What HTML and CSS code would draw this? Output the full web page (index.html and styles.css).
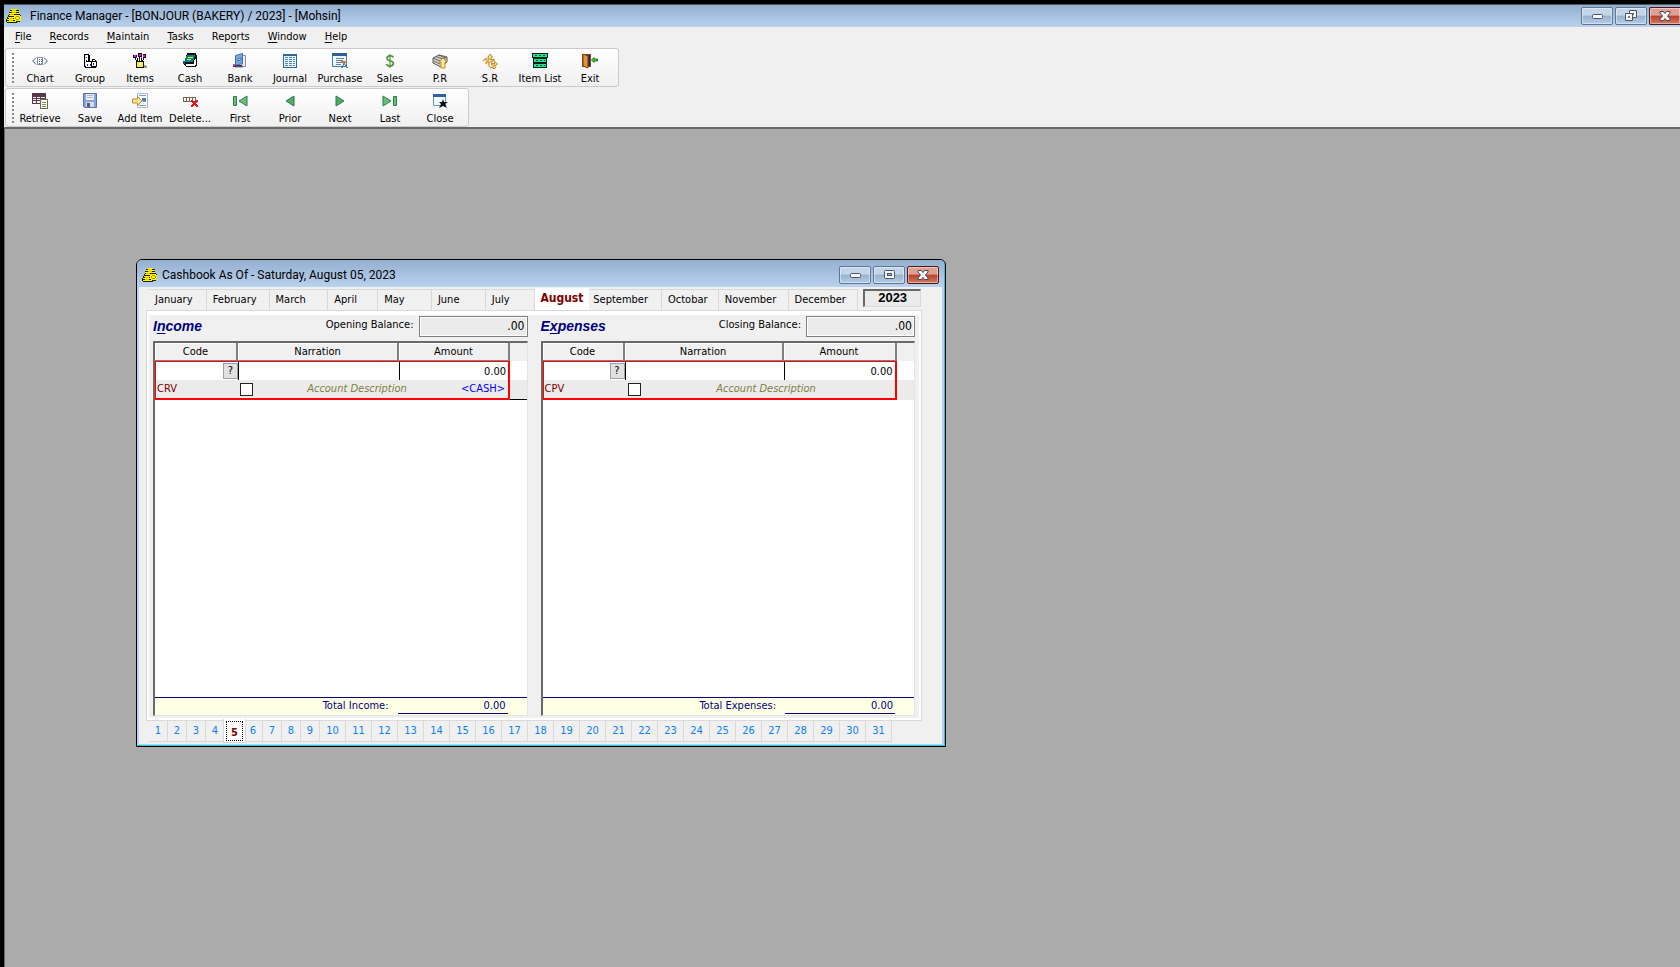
FILE: index.html
```html
<!DOCTYPE html>
<html lang="en">
<head>
<meta charset="utf-8">
<title>Finance Manager</title>
<link rel="stylesheet" href="styles.css">
</head>
<body>
<svg class="defs" aria-hidden="true">
  <symbol id="coins" viewBox="0 0 16 16">
    <g shape-rendering="crispEdges">
      <path d="M5 1h6v1h2v4h1v1h1v5h-1v2h-3v1H1v-1H0v-3h1V9h1V7h1V4h1V2h1z" fill="#222205"/>
      <path d="M5 1h6v1H5zM4 3h9v1H4zM3 5h10v1H3zM3 7h6v1H3zM2 9h6v1H2zM1 11h7v1H1zM1 13h9v1H1zM9 7h5v1h1v4h-1v1H9v-1H8V8h1z" fill="#fff500"/>
      <path d="M10 8h3v1h-3zM13 9h1v2h-1zM10 11h3v1h-3zM9 9h1v2H9z" fill="#a8a000"/>
      <path d="M6 2h4v1H6zM6 4h4v1H6zM4 6h4v1H4zM3 10h4v1H3zM3 12h4v1H3z" fill="#d6cd00"/>
    </g>
  </symbol>
  <symbol id="min" viewBox="0 0 12 12"><rect x="1.500" y="4.500" width="10" height="4" rx="1" fill="#f6f6f6" stroke="#4c5666"/></symbol>
  <symbol id="max" viewBox="0 0 12 12"><rect x="1.500" y="1.500" width="10" height="8" rx="1" fill="#f6f6f6" stroke="#4c5666"/><rect x="4.500" y="4.500" width="4" height="2" fill="#9ab3ce" stroke="#4c5666"/></symbol>
  <symbol id="restore" viewBox="0 0 12 12"><path d="M4.500.5h7v7h-7z" fill="#f6f6f6" stroke="#4c5666"/><path d="M7.500 3.500h1v1h-1z" stroke="#4c5666"/><path d="M.5 3.500h7v7h-7z" fill="#f6f6f6" stroke="#4c5666"/><path d="M3.500 6.500h1v1h-1z" fill="#9ab3ce" stroke="#4c5666"/></symbol>
  <symbol id="cross" viewBox="0 0 12 12"><path d="M1 1.500h3.500L6 3.500l1.500-2H11v1.500L8.500 6 11 9v1.500H7.500L6 8.500l-1.500 2H1V9l2.500-3L1 3z" fill="#f8f8f8" stroke="#4c4658"/></symbol>
</svg>

<div class="app">
  <header class="titlebar">
    <svg class="ico" aria-hidden="true"><use href="#coins"/></svg>
    <h1 class="title">Finance Manager - [BONJOUR (BAKERY) / 2023] - [Mohsin]</h1>
    <div class="winbtns">
      <button class="winbtn" aria-label="Minimize"><svg><use href="#min"/></svg></button>
      <button class="winbtn" aria-label="Restore"><svg><use href="#restore"/></svg></button>
      <button class="winbtn winclose clipped" aria-label="Close"><svg><use href="#cross"/></svg></button>
    </div>
  </header>

  <nav class="menu">
    <button><u>F</u>ile</button><button><u>R</u>ecords</button><button><u>M</u>aintain</button><button><u>T</u>asks</button><button>Rep<u>o</u>rts</button><button><u>W</u>indow</button><button><u>H</u>elp</button>
  </nav>

  <div class="toolbar">
    <span class="grip"></span>
    <button><svg class="ico" viewBox="0 0 16 16"><path d="M4 4.500L.7 8 4 11.500M12 4.500L15.300 8 12 11.500" fill="none" stroke="#3f6ea8"/><path d="M5.500 4.500h5v7h-5z" fill="#fff" stroke="#7a889a"/><path d="M7 6h1v1H7zM9 6h1v1H9zM7 8h1v1H7zM9 8h1v1H9zM7 10h1v1H7zM9 10h1v1H9z" fill="#3f6ea8"/></svg>Chart</button>
    <button><svg class="ico" viewBox="0 0 16 16" shape-rendering="crispEdges"><path d="M2 1h5v1h1v6h2V6h3v1h1v1h1v6h-1v1H3v-1H2z" fill="#000"/><path d="M4 2h2v6H4zM3 9h6v5H4v-1H3zM11 7h2v1h-2zM10 9h4v4h-4z" fill="#fff"/><path d="M3 2h1v11H3z" fill="#ddd"/><path d="M4 4h1v1H4zM4 7h1v1H4zM5 11h1v2H5zM8 11h1v2H8zM11 10h1v2h-1z" fill="#2020e0"/></svg>Group</button>
    <button><svg class="ico" viewBox="0 0 16 16" shape-rendering="crispEdges"><path d="M11 13h4v2h-4zM12 12h2v1h-2z" fill="#999"/><path d="M1 2h4v3H1zM6 0h4v4H6zM11 1h3v4h-3zM3 5h1v2H3zM7 4h1v4H7zM11 5h1v2h-1zM4 7h2v1H4zM9 7h2v1H9zM9 5h1v2H9zM5 5h1v2H5z" fill="#111"/><path d="M2 2h2v2H2zM7 1h2v2H7zM11 2h2v2h-2zM4 4h1v1H4zM9 4h1v1H9z" fill="#f016e8"/><path d="M4 8h8v7H4z" fill="#111"/><path d="M5 9h6v5H5z" fill="#f7e93b"/><path d="M7 10h2v2H7z" fill="#fff"/></svg>Items</button>
    <button><svg class="ico" viewBox="0 0 16 16" shape-rendering="crispEdges"><path d="M5 0h9v2h1v10l-2 2H4l-2-2 1-5z" fill="#111"/><path d="M5 2h8l-2 7H2z" fill="#078080"/><path d="M4 11h8V9l1-3h1v5l-2 2H4z" fill="#fff"/><path d="M6 4h5v1H6zM5 6h4v1H5z" fill="#f5ee36"/><path d="M1 8h2v3H1z" fill="#056060"/></svg>Cash</button>
    <button><svg class="ico" viewBox="0 0 16 16"><path d="M10 2.500h3.500v11H10z" fill="#eef" stroke="#888b94"/><path d="M3.500 2.500l7-2v10l-7 2z" fill="#78a8e4" stroke="#466ba3"/><path d="M6 6l3-1v2L6 8z" fill="#f4ebbd" stroke="#496c9a"/><path d="M1 12h9v2H1z" fill="#39364b"/><path d="M1 11h2v2H1z" fill="#e334dc"/><path d="M3 14h8" stroke="#777"/></svg>Bank</button>
    <button><svg class="ico" viewBox="0 0 16 16" shape-rendering="crispEdges"><path d="M1 1h14v14H1z" fill="#2d679e"/><path d="M2 3h12v11H2z" fill="#e7f2fa"/><path d="M3 4h10M3 6h10M3 8h10M3 10h10M3 12h10" transform="translate(0 .5)" stroke="#4b8ec5" stroke-dasharray="3 1"/></svg>Journal</button>
    <button><svg class="ico" viewBox="0 0 16 16"><path d="M.5 1.500h14v12H.5z" fill="#eff6fc" stroke="#477bac"/><path d="M0 0h15v3H0z" fill="#315f99"/><path d="M4 5.500h8M4 7.500h7M4 9.500h6M4 11.500h5" stroke="#6f8193"/><path d="M9 8h6v2H9z" fill="#c87a48"/><path d="M12 10l-2 5M12 10l3 5" stroke="#276f9e"/><path d="M9 14h2v1H9zM14 14h2v1h-2z" fill="#43a637"/></svg>Purchase</button>
    <button><svg class="ico" viewBox="0 0 16 16"><path d="M8 1v14" stroke="#397e27"/><path d="M11.300 4.500C10.500 2 5 2.300 5 5.200c0 3.300 6.400 2 6.400 5.200 0 3-6 3.300-6.800.5" fill="none" stroke="#4f9737" stroke-width="1.700"/></svg>Sales</button>
    <button><svg class="ico" viewBox="0 0 16 16"><path d="M1 5l6-3 8 2v5l-6 5-8-4z" fill="#d4d4cc" stroke="#55564e"/><path d="M1 5l7 3 7-4M2 8l6 3M4 3.500l7 2.500M7 2l6 3" stroke="#65665e" fill="none"/><path d="M11 5l4 4h-2v6H9V9H7z" fill="#ffe7a0" stroke="#c68b22"/></svg>P.R</button>
    <button><svg class="ico" viewBox="0 0 16 16"><path d="M.7 8L4 5v2h3V5H5.500L8 1l2.500 3L9 5v2l3-1v2H9v2h1" fill="#fcdd91" stroke="#be872c"/><path d="M4 11V9h3v4l1 1.500h3M9.500 10.500h3v-2l3 2.500-3 2v-1h-3zM11 13v2.500h2l1-2" fill="#fcdd91" stroke="#be872c"/></svg>S.R</button>
    <button><svg class="ico" viewBox="0 0 16 16" shape-rendering="crispEdges"><path d="M0 0h16v5h-1v10H1V5H0z" fill="#061c18"/><path d="M1 1h14v3H1zM2 6h12v3H2zM2 11h12v3H2z" fill="#16e78b"/><path d="M3 2h2v1H3zM7 2h2v1H7zM11 2h2v1h-2zM4 7h2v1H4zM8 7h2v1H8zM12 7h1v1h-1zM4 12h2v1H4zM8 12h2v1H8zM12 12h1v1h-1z" fill="#06403a"/></svg>Item List</button>
    <button><svg class="ico" viewBox="0 0 16 16"><path d="M0 1h9v13H0z" fill="#8f4519"/><path d="M4 2h4v11H4z" fill="#152a65"/><path d="M1 1l5 2v12l-5-2z" fill="#e39238" stroke="#7b4119"/><path d="M9.500 7L12 4.500v1.500h3.500v2H12v1.500z" fill="#4db833" stroke="#278820"/></svg>Exit</button>
  </div>

  <div class="toolbar last">
    <span class="grip"></span>
    <button><svg class="ico" viewBox="0 0 16 16" shape-rendering="crispEdges"><path d="M0 0h14v11H0z" fill="#59374f"/><path d="M1 4h3v1H1zM5 4h3v1H5zM9 4h4v1H9zM1 6h3v1H1zM5 6h3v1H5zM9 6h4v1H9zM1 8h3v2H1zM5 8h3v2H5z" fill="#eee"/><path d="M8 6h8v10H8z" fill="#6d6e50"/><path d="M9 7h6v8H9z" fill="#fffff0"/><path d="M10 9h4v1h-4zM10 11h4v1h-4zM10 13h4v1h-4z" fill="#8c8d70"/></svg>Retrieve</button>
    <button><svg class="ico" viewBox="0 0 16 16"><path d="M1.500.5h13v14h-12l-1-1z" fill="#8aa4da" stroke="#596fa9"/><path d="M4 1h8v6H4z" fill="#eaf0fb"/><path d="M5 2.500h6M5 4.500h6" stroke="#a8b6cf"/><path d="M4 9h8v5H4z" fill="#d5dae4"/><path d="M5 10h3v4H5z" fill="#4c5d87"/></svg>Save</button>
    <button><svg class="ico" viewBox="0 0 16 16"><path d="M5.500.5h10v14h-10z" fill="#f6f9fd" stroke="#aeb6c0"/><path d="M7 2.500h7M10 5.500h4M11 8.500h3M7 12.500h7" stroke="#7f9fc6"/><path d="M10 5h4v3h-4z" fill="#477dba"/><path d="M.5 6h5V3.500L10 8l-4.500 4.500V10h-5z" fill="#ffe69b" stroke="#c28928"/></svg>Add Item</button>
    <button><svg class="ico" viewBox="0 0 16 16" shape-rendering="crispEdges"><path d="M1 4h13v5H1z" fill="#706858"/><path d="M2 5h2v3H2zM5 5h2v3H5zM8 5h2v3H8zM11 5h2v3h-2z" fill="#fffff0"/><path d="M9 7h2v1h1v1h1V8h1V7h2v2h-1v1h-1v1h1v1h1v2h-2v-1h-1v-1h-1v1h-1v1H9v-2h1v-1h1v-1h-1V9H9z" fill="#e31620"/></svg>Delete...</button>
    <button><svg class="ico" viewBox="0 0 16 16"><path d="M1.500 3.500h3v9h-3zM15 3v10L7 8z" fill="#6dba7c" stroke="#268049"/></svg>First</button>
    <button><svg class="ico" viewBox="0 0 16 16"><path d="M12 3v10L4 8z" fill="#52aa67" stroke="#268049"/></svg>Prior</button>
    <button><svg class="ico" viewBox="0 0 16 16"><path d="M4 3v10l8-5z" fill="#52aa67" stroke="#268049"/></svg>Next</button>
    <button><svg class="ico" viewBox="0 0 16 16"><path d="M11.500 3.500h3v9h-3zM1 3v10l8-5z" fill="#6dba7c" stroke="#268049"/></svg>Last</button>
    <button><svg class="ico" viewBox="0 0 16 16"><path d="M1.500 1.500h12v11h-12z" fill="#f3f8fd" stroke="#6291c3"/><path d="M1 1h13v3H1z" fill="#2c62a8"/><path d="M11 6l1 3h4l-3 2 2 4-4-2-4 2 2-4-2-2h3z" fill="#0a1020"/></svg>Close</button>
  </div>

  <main class="desktop">
    <section class="window">
      <header class="titlebar">
        <svg class="ico" aria-hidden="true"><use href="#coins"/></svg>
        <h2 class="title">Cashbook As Of - Saturday, August 05, 2023</h2>
        <div class="winbtns">
          <button class="winbtn" aria-label="Minimize"><svg><use href="#min"/></svg></button>
          <button class="winbtn" aria-label="Maximize"><svg><use href="#max"/></svg></button>
          <button class="winbtn winclose" aria-label="Close"><svg><use href="#cross"/></svg></button>
        </div>
      </header>
      <div class="client">
        <nav class="months">
          <button class="m58">January</button><button class="m63">February</button><button class="m59">March</button><button class="m50">April</button><button class="m54">May</button><button class="m54">June</button><button class="m49">July</button><button class="m55 current">August</button><button class="m73 near">September</button><button class="m57">Octobar</button><button class="m70">November</button><button class="m70">December</button>
          <output class="year">2023</output>
        </nav>

        <div class="sheet">
          <section class="ledger">
            <div class="summary">
              <h3>I<u>n</u>come</h3>
              <label for="opening">Opening Balance:</label>
              <input id="opening" class="balance" value=".00" readonly>
            </div>
            <div class="grid">
              <table>
                <colgroup><col class="c-code"><col class="c-narr"><col class="c-amt"><col></colgroup>
                <thead><tr><th>Code</th><th>Narration</th><th>Amount</th><td></td></tr></thead>
                <tbody>
                  <tr class="entry">
                    <td><div class="lookup"><input aria-label="Income code"><button>?</button></div></td>
                    <td><input aria-label="Income narration"></td>
                    <td><input class="num" aria-label="Income amount" value="0.00"></td>
                    <td></td>
                  </tr>
                  <tr class="detail">
                    <td colspan="3"><div class="account"><span class="voucher">CRV</span><input type="checkbox" aria-label="Mark income entry"><em>Account Description</em><span class="cash">&lt;CASH&gt;</span></div></td>
                    <td class="ruled"></td>
                  </tr>
                </tbody>
              </table>
              <div class="total"><span class="total-label">Total Income:</span><span class="sum">0.00</span></div>
            </div>
          </section>

          <section class="ledger">
            <div class="summary">
              <h3>E<u>x</u>penses</h3>
              <label for="closing">Closing Balance:</label>
              <input id="closing" class="balance" value=".00" readonly>
            </div>
            <div class="grid">
              <table>
                <colgroup><col class="c-code"><col class="c-narr"><col class="c-amt"><col></colgroup>
                <thead><tr><th>Code</th><th>Narration</th><th>Amount</th><td></td></tr></thead>
                <tbody>
                  <tr class="entry">
                    <td><div class="lookup"><input aria-label="Expense code"><button>?</button></div></td>
                    <td><input aria-label="Expense narration"></td>
                    <td><input class="num" aria-label="Expense amount" value="0.00"></td>
                    <td></td>
                  </tr>
                  <tr class="detail">
                    <td colspan="3"><div class="account"><span class="voucher">CPV</span><input type="checkbox" aria-label="Mark expense entry"><em>Account Description</em></div></td>
                    <td></td>
                  </tr>
                </tbody>
              </table>
              <div class="total"><span class="total-label">Total Expenses:</span><span class="sum">0.00</span></div>
            </div>
          </section>
        </div>

        <nav class="days">
          <button>1</button><button>2</button><button>3</button><button>4</button><button class="today"><span>5</span></button><button>6</button><button>7</button><button>8</button><button>9</button><button class="two-digit">10</button><button class="two-digit">11</button><button class="two-digit">12</button><button class="two-digit">13</button><button class="two-digit">14</button><button class="two-digit">15</button><button class="two-digit">16</button><button class="two-digit">17</button><button class="two-digit">18</button><button class="two-digit">19</button><button class="two-digit">20</button><button class="two-digit">21</button><button class="two-digit">22</button><button class="two-digit">23</button><button class="two-digit">24</button><button class="two-digit">25</button><button class="two-digit">26</button><button class="two-digit">27</button><button class="two-digit">28</button><button class="two-digit">29</button><button class="two-digit">30</button><button class="two-digit">31</button>
        </nav>
      </div>
    </section>
  </main>
</div>
</body>
</html>
```
FILE: styles.css
```css
* { box-sizing: border-box; }

body {
  margin: 0;
  overflow: hidden;
  color: #000;
  background: #000;
  font: 11px/14px "DejaVu Sans Condensed", "Noto Sans", sans-serif;
}

button, input {
  margin: 0;
  padding: 0;
  border: 0;
  border-radius: 0;
  background: none;
  color: inherit;
  font: inherit;
}

u { text-underline-offset: 2px; }

.defs { display: none; }

.ico {
  flex: none;
  width: 16px;
  height: 16px;
}

.app {
  display: flex;
  flex-direction: column;
  height: 100vh;
  border: solid #000;
  border-width: 4px 0 0 4px;
  background: #f0f0f0;
}

/* Title bars */
.titlebar {
  display: flex;
  flex: none;
  align-items: center;
  height: 23px;
  padding-left: 2px;
  border-top: 1px solid #4b5563;
  background: linear-gradient(#94b0cf, #b9d2ee);
}

.title {
  flex: 1;
  margin: 0 0 0 8px;
  font: 12px/16px Roboto, "Noto Sans", sans-serif;
}

.winbtns {
  display: flex;
  gap: 2px;
}

.winbtn {
  display: flex;
  align-items: center;
  justify-content: center;
  width: 32px;
  height: 18px;
  border: 1px solid #5f7694;
  border-radius: 2px;
  background: linear-gradient(#c3d5e8 0 45%, #98b2cf 50%, #b5cde6);
  box-shadow: inset 0 0 0 1px #ffffff70;
}

.winbtn svg {
  width: 12px;
  height: 12px;
}

.winclose {
  border-color: #52151b;
  background: linear-gradient(#dda093 0 45%, #b8402c 50%, #cf7b61);
}

.clipped {
  width: 31px;
  border-right: 0;
  border-radius: 2px 0 0 2px;
}

/* Menu and toolbars */
.menu {
  display: flex;
  flex: none;
  gap: 18px;
  height: 21px;
  padding: 0 11px 1px;
}

.toolbar {
  display: flex;
  flex: none;
  align-self: flex-start;
  height: 39px;
  margin: 0 0 1px 1px;
  padding: 0 3px 0 0;
  border: 1px solid #cbcbcb;
  border-radius: 3px;
  background: linear-gradient(#fff, #f0f0f0);
}

.toolbar.last { margin-bottom: 0; }

.grip {
  width: 2px;
  margin: 4px 1px 2px 6px;
  background: repeating-linear-gradient(#8a8a8a 0 2px, transparent 2px 4px);
}

.toolbar button {
  display: flex;
  flex-direction: column;
  align-items: center;
  gap: 3px;
  width: 50px;
  padding-top: 4px;
  white-space: nowrap;
}

.desktop {
  position: relative;
  flex: 1;
  border: solid #696969;
  border-width: 2px 0 0 1px;
  background: #ababab;
}

/* Cashbook window */
.window {
  position: absolute;
  left: 131px;
  top: 130px;
  width: 810px;
  padding: 0 1px 2px 2px;
  border: 1px solid #000;
  border-radius: 6px 6px 0 0;
  background: #b9d2ee;
  box-shadow: inset -1px -1px #20c6dc;
}

.window .titlebar {
  height: 27px;
  margin: 0 0 0 -2px;
  padding: 2px 5px 0;
  border-top: 0;
  border-radius: 5px 5px 0 0;
}

.window .title { margin-left: 4px; }

.client {
  margin-right: 2px;
  padding: 1px 21px 2px 8px;
  background: #f0f0f0;
}

.months {
  display: flex;
  align-items: flex-start;
  height: 23px;
  padding-left: 2px;
}

.months button {
  height: 22px;
  margin-top: 1px;
  padding-left: 6px;
  border: solid #d9d9d9;
  border-width: 1px 1px 1px 0;
  text-align: left;
}

.months .near { padding-left: 4px; }

.months .current {
  height: 24px;
  margin: 0 0 -1px;
  padding: 0 0 5px;
  border: 0;
  background: #fff;
  color: #800000;
  font-size: 12px;
  font-weight: bold;
  text-align: center;
}

.m49 { width: 49px; }
.m50 { width: 50px; }
.m54 { width: 54px; }
.m55 { width: 55px; }
.m57 { width: 57px; }
.m58 { width: 58px; }
.m59 { width: 59px; }
.m63 { width: 63px; }
.m70 { width: 70px; }
.m73 { width: 73px; }

.year {
  width: 58px;
  height: 18px;
  margin: 1px 0 0 5px;
  border: solid;
  border-width: 2px 1px 1px 2px;
  border-color: #696969 #d9d9d9 #d9d9d9 #696969;
  background: #ebebeb;
  font: bold 13px/14px "Liberation Sans", sans-serif;
  text-align: center;
}

.sheet {
  display: flex;
  gap: 13px;
  padding: 2px 4px;
  border: solid;
  border-width: 4px 2px 2px;
  border-color: #fff;
  outline: 1px solid #d9d9d9;
}

.ledger {
  flex: 1;
  min-width: 0;
}

.summary {
  display: flex;
  align-items: center;
  height: 22px;
  margin: -2px 0 4px;
}

.summary h3 {
  flex: 1;
  margin: 0;
  color: #000080;
  font: italic bold 14px/16px "Liberation Sans", sans-serif;
}

.summary label {
  margin: 0 5px 2px 0;
}

.balance {
  width: 109px;
  height: 21px;
  padding: 0 2px;
  border: 1px solid #808080;
  box-shadow: inset 0 0 0 1px #fff;
  background: #ebebeb;
  font-size: 12px;
  text-align: right;
}

.grid {
  display: flex;
  flex-direction: column;
  justify-content: space-between;
  height: 375px;
  border: solid;
  border-width: 2px 1px 1px 2px;
  border-color: #696969 #e3e3e3 #e3e3e3 #696969;
  background: #fff;
}

table {
  width: 100%;
  table-layout: fixed;
  border-spacing: 0;
}

.c-code { width: 83px; }
.c-narr { width: 161px; }
.c-amt { width: 111px; }
.ledger + .ledger .c-code { width: 82px; }
.ledger + .ledger .c-narr { width: 159px; }
.ledger + .ledger .c-amt { width: 113px; }

th, td { padding: 0; }

thead th, thead td {
  height: 18px;
  background: #f0f0f0;
}

thead th {
  border: solid #808080;
  border-width: 0 2px 1px 0;
  box-shadow: inset 1px 1px #fff;
  font-weight: normal;
  line-height: 14px;
}

.entry td {
  height: 19px;
  border-top: 1px solid #f00;
  border-left: 1px solid #000;
}

.entry td:first-child { border-left-color: #f00; }
.entry td:nth-child(3) { border-right: 2px solid #f00; }
.entry td:last-child { border: 0; }

.entry input {
  display: block;
  width: 100%;
  height: 18px;
}

.entry .num {
  padding-right: 2px;
  text-align: right;
}

.lookup { display: flex; }
.lookup input {
  flex: 1;
  min-width: 0;
}

.lookup button {
  width: 15px;
  height: 16px;
  margin-top: 1px;
  border: 1px solid #a0a0a0;
  background: #e1e1e1;
}

.detail td {
  height: 20px;
  background: #ebebeb;
}

.detail td:first-child {
  border: solid #f00;
  border-width: 0 2px 2px 1px;
}

.detail .ruled { border-bottom: 1px solid #000; }

.account {
  display: flex;
  align-items: center;
  padding: 0 3px 0 1px;
}

.voucher {
  width: 83px;
  color: #800000;
}

.account input {
  appearance: none;
  width: 13px;
  height: 13px;
  border: 1px solid #222;
  background: #fff;
}

.account em {
  flex: 1;
  color: #808040;
  text-align: center;
}

.cash { color: #00f; }

.total {
  display: flex;
  height: 18px;
  border-top: 1px solid #000080;
  background: #ffffe6;
  color: #000080;
}

.total-label {
  flex: 1;
  padding: 1px 9px 0 0;
  text-align: right;
}

.sum {
  width: 110px;
  height: 16px;
  margin-right: 19px;
  padding: 1px 2px 0 0;
  border-bottom: 1px solid #000080;
  text-align: right;
}

.days {
  display: flex;
  height: 22px;
  padding: 1px 0 0 2px;
}

.days button {
  flex: none;
  width: 19px;
  height: 21px;
  border: solid #d9d9d9;
  border-width: 0 1px 1px 0;
  color: #0a80ff;
}

.days button.two-digit { width: 26px; }

.days button.today {
  z-index: 1;
  width: 23px;
  height: 24px;
  margin: -2px -2px 0;
  padding: 2px;
  border: 1px solid #d9d9d9;
  border-top: 0;
  background: #fff;
  color: #800000;
  font-weight: bold;
}

.today span {
  display: block;
  height: 20px;
  padding-top: 2px;
  border: 1px dotted #000;
  line-height: 18px;
}
```
